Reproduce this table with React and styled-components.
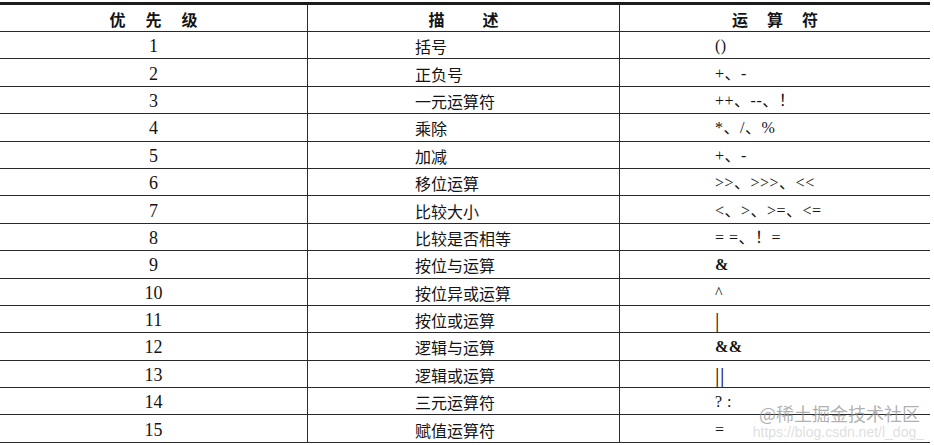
import React from 'react';
import styled, { createGlobalStyle } from 'styled-components';

const GlobalStyle = createGlobalStyle`
  html, body {
    margin: 0;
    padding: 0;
    background: #fff;
  }
  body {
    font-family: "Liberation Serif", "Noto Sans CJK SC", serif;
    color: #141414;
  }
`;

const Page = styled.div`
  position: relative;
  width: 934px;
  height: 445px;
  overflow: hidden;
  padding-top: 2px;
  box-sizing: border-box;
`;

const Table = styled.div`
  width: 930px;
  border-top: 3px solid #1c1c1c;
`;

const Row = styled.div`
  display: grid;
  grid-template-columns: 308px 312px 310px;
  height: ${p => (p.$head ? '27px' : '27.4px')};
  box-sizing: border-box;
  border-bottom: 1px solid #2a2a2a;
`;

const Cell = styled.div`
  display: flex;
  align-items: center;
  box-sizing: border-box;
  border-right: ${p => (p.$last ? 'none' : '1px solid #2a2a2a')};
  justify-content: ${p => (p.$center ? 'center' : 'flex-start')};
  padding-left: ${p => p.$indent || 0}px;
  padding-top: 2px;
  white-space: nowrap;
`;

const HeadText = styled.div`
  display: flex;
  gap: ${p => p.$gap}px;
  font-family: "Noto Sans CJK SC", sans-serif;
  font-weight: 700;
  font-size: 16px;
  line-height: 1;
`;

const Num = styled.span`
  font-family: "Liberation Serif", serif;
  font-size: 18px;
  line-height: 1;
`;

const Desc = styled.span`
  font-family: "Noto Sans CJK SC", sans-serif;
  font-size: 16px;
  line-height: 1;
`;

const Op = styled.span`
  font-family: "Liberation Serif", "Noto Sans CJK SC", serif;
  font-size: ${p => p.$size || 16}px;
  font-weight: ${p => (p.$bold ? 700 : 400)};
  line-height: 1;
  letter-spacing: 0.5px;
`;

const Watermark = styled.div`
  position: absolute;
  right: 14px;
  bottom: 5px;
  display: flex;
  flex-direction: column;
  align-items: flex-end;
  gap: 2px;
  pointer-events: none;
`;

const MarkMain = styled.span`
  font-family: "Noto Sans CJK SC", sans-serif;
  font-size: 18px;
  color: rgba(150, 150, 150, 0.75);
  line-height: 19px;
`;

const MarkSub = styled.span`
  font-family: "Liberation Sans", sans-serif;
  font-size: 14px;
  color: rgba(200, 200, 200, 0.6);
  line-height: 15px;
  margin-right: -4px;
`;

const rows = [
  ['1', '括号', '()'],
  ['2', '正负号', '+、-'],
  ['3', '一元运算符', '++、--、！'],
  ['4', '乘除', '*、/、%'],
  ['5', '加减', '+、-'],
  ['6', '移位运算', '>>、>>>、<<'],
  ['7', '比较大小', '<、>、>=、<='],
  ['8', '比较是否相等', '= =、！='],
  ['9', '按位与运算', '&'],
  ['10', '按位异或运算', '^'],
  ['11', '按位或运算', '|', 22],
  ['12', '逻辑与运算', '&&'],
  ['13', '逻辑或运算', '||', 22],
  ['14', '三元运算符', '? :'],
  ['15', '赋值运算符', '='],
];

export default function App() {
  return (
    <>
      <GlobalStyle />
      <Page>
        <Table>
          <Row $head>
            <Cell $center>
              <HeadText $gap={20}><span>优</span><span>先</span><span>级</span></HeadText>
            </Cell>
            <Cell $center>
              <HeadText $gap={38}><span>描</span><span>述</span></HeadText>
            </Cell>
            <Cell $center $last>
              <HeadText $gap={19}><span>运</span><span>算</span><span>符</span></HeadText>
            </Cell>
          </Row>
          {rows.map(([n, d, o, size]) => (
            <Row key={n}>
              <Cell $center><Num>{n}</Num></Cell>
              <Cell $indent={107}><Desc>{d}</Desc></Cell>
              <Cell $indent={95} $last>
                <Op $size={size} $bold={o.startsWith('&')}>{o}</Op>
              </Cell>
            </Row>
          ))}
        </Table>
        <Watermark>
          <MarkMain>@稀土掘金技术社区</MarkMain>
          <MarkSub>https://blog.csdn.net/l_dog_</MarkSub>
        </Watermark>
      </Page>
    </>
  );
}
